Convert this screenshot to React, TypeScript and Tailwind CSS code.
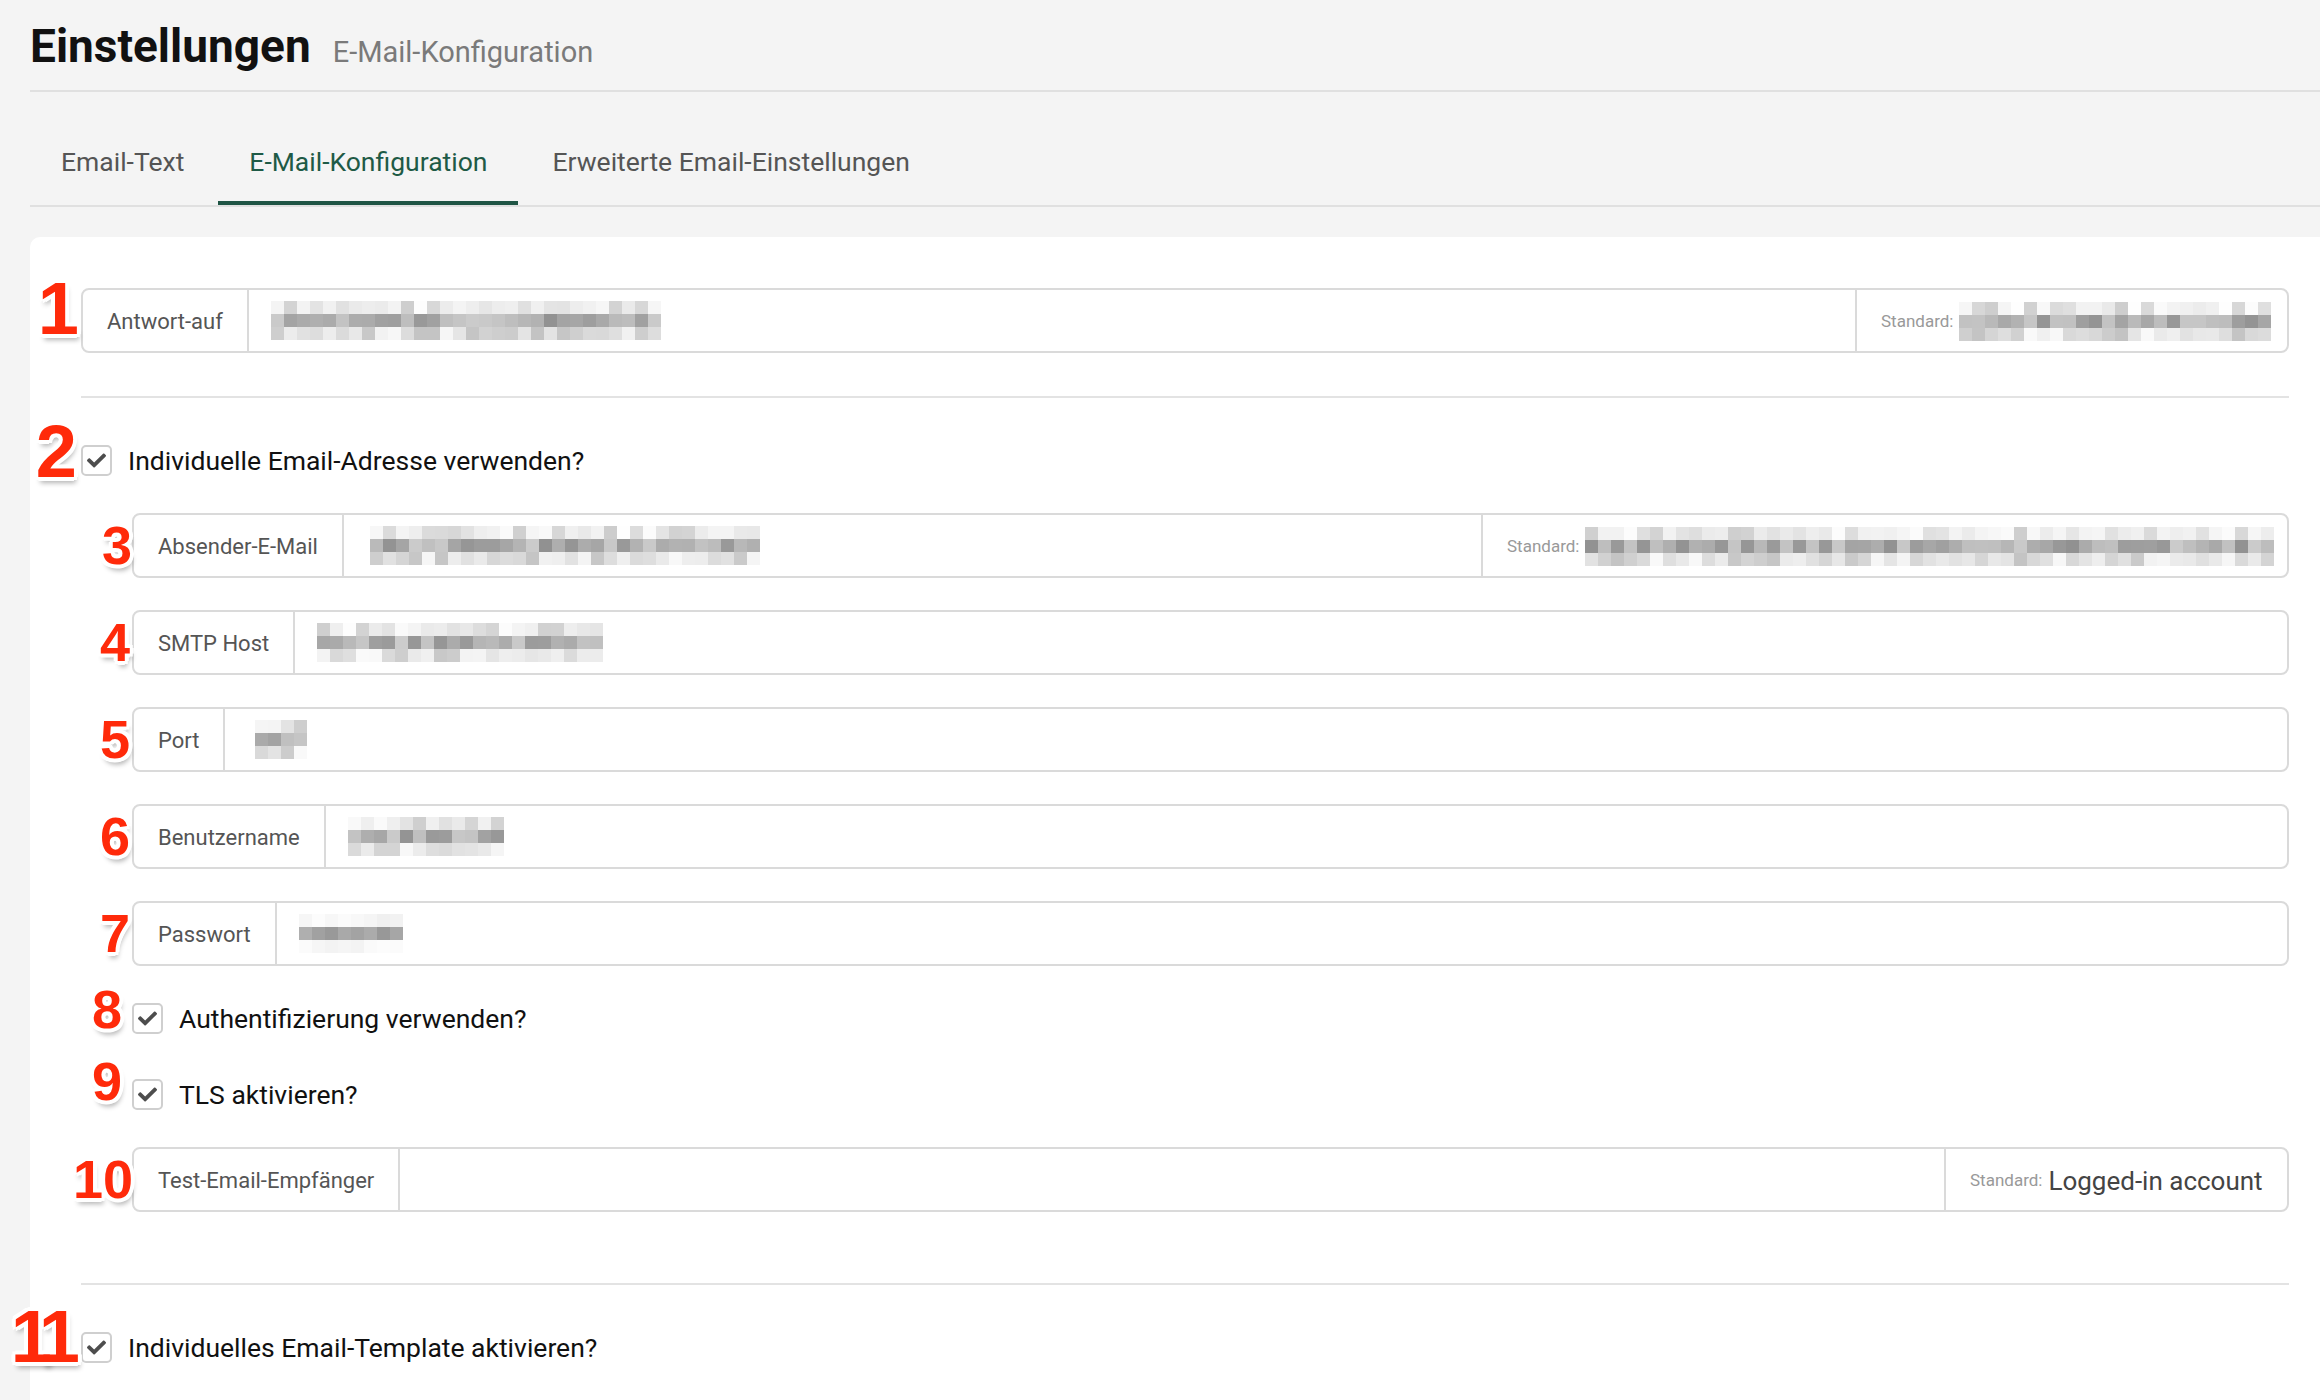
import type { ReactNode } from "react";

const SANS = "font-['Roboto','Liberation_Sans',sans-serif]";

// deterministic grey blocks that stand in for the pixelated values
function Mosaic({ cols, seed, rows = 3, mode = "text" }: { cols: number; seed: number; rows?: number; mode?: "text" | "dots" }) {
  let s = seed;
  const rand = () => {
    s = (s * 9301 + 49297) % 233280;
    return s / 233280;
  };
  const cells: number[] = [];
  for (let r = 0; r < rows; r++) {
    for (let c = 0; c < cols; c++) {
      let g: number;
      if (mode === "dots") {
        g = r === 1 ? 150 + rand() * 25 : 240 + rand() * 14;
      } else if (r === 1) {
        g = 145 + rand() * 60;
      } else if (r === 0) {
        g = rand() < 0.35 ? 205 + rand() * 25 : 232 + rand() * 22;
      } else {
        g = rand() < 0.5 ? 195 + rand() * 30 : 225 + rand() * 25;
      }
      cells.push(Math.round(g));
    }
  }
  return (
    <div className="grid" style={{ gridTemplateColumns: `repeat(${cols}, 13px)`, gridAutoRows: "13px" }}>
      {cells.map((g, i) => (
        <div key={i} style={{ backgroundColor: `rgb(${g},${g},${g})` }} />
      ))}
    </div>
  );
}

const MARK =
  "pointer-events-none absolute font-['Liberation_Sans',Arial,sans-serif] font-bold leading-none text-[#ff2a0a] [text-shadow:-3px_-3px_0_#fff,3px_-3px_0_#fff,-3px_3px_0_#fff,3px_3px_0_#fff,0_4px_0_#fff,0_-4px_0_#fff,4px_0_0_#fff,-4px_0_0_#fff,2px_6px_5px_rgba(0,0,0,0.3)]";

function Marker({ n, big, className }: { n: string; big?: boolean; className: string }) {
  return <span className={`${MARK} ${big ? "text-[74px]" : "text-[54px]"} ${className}`}>{n}</span>;
}

function Field({
  label,
  marker,
  children,
  standard,
  standardWidth,
}: {
  label: string;
  marker: ReactNode;
  children?: ReactNode;
  standard?: ReactNode;
  standardWidth?: string;
}) {
  return (
    <div className="relative flex h-[65px] rounded-[8px] border-2 border-[#dadada] bg-white">
      {marker}
      <div className="flex items-center border-r-2 border-[#dadada] px-[24px] pt-[3px] text-[22px] text-[#555]">{label}</div>
      <div className="flex min-w-0 flex-1 items-center pl-[22px]">{children}</div>
      {standard && (
        <div className={`flex items-center border-l-2 border-[#dadada] px-[24px] pt-[3px] ${standardWidth}`}>
          <span className="mr-[6px] text-[17px] text-[#999]">Standard:</span>
          {standard}
        </div>
      )}
    </div>
  );
}

function Check({ label, marker, className = "" }: { label: string; marker: ReactNode; className?: string }) {
  return (
    <div className={`relative flex items-center gap-[16px] ${className}`}>
      {marker}
      <span className="flex h-[31px] w-[31px] items-center justify-center rounded-[5px] border-2 border-[#cfcfcf] bg-white">
        <svg width="19" height="19" viewBox="0 0 512 512">
          <path
            fill="#4d4d4d"
            d="M173.898 439.404l-166.4-166.4c-9.997-9.997-9.997-26.206 0-36.204l36.203-36.204c9.997-9.998 26.207-9.998 36.204 0L192 312.69 432.095 72.596c9.997-9.997 26.207-9.997 36.204 0l36.203 36.204c9.997 9.997 9.997 26.206 0 36.204l-294.4 294.401c-9.998 9.997-26.207 9.997-36.204-.001z"
          />
        </svg>
      </span>
      <span className="pt-[3px] text-[26.5px] leading-none text-[#111]">{label}</span>
    </div>
  );
}

export default function App() {
  const tabs = ["Email-Text", "E-Mail-Konfiguration", "Erweiterte Email-Einstellungen"];
  return (
    <div className={`h-[1400px] w-[2320px] overflow-hidden bg-[#f4f4f4] pl-[30px] ${SANS}`}>
      <div className="flex items-baseline gap-[22px] border-b-2 border-[#e0e0e0] pt-[23px] pb-[21px]">
        <h1 className="text-[46px] leading-none font-bold text-[#111]">Einstellungen</h1>
        <span className="text-[29px] leading-none text-[#7a7a7a]">E-Mail-Konfiguration</span>
      </div>

      <div className="mt-[57px] flex gap-[3px] border-b-2 border-[#e0e0e0]">
        {tabs.map((t, i) => (
          <div
            key={t}
            className={`border-b-4 px-[31px] pb-[25px] text-[26.5px] leading-none ${
              i === 1 ? "border-[#1f5545] text-[#1e5a46]" : "border-transparent text-[#555]"
            }`}
          >
            {t}
          </div>
        ))}
      </div>

      <div className="mt-[30px] min-h-[1200px] w-[2310px] rounded-tl-[10px] bg-white px-[51px] pt-[51px]">
        <Field
          label="Antwort-auf"
          marker={<Marker n="1" big className="top-[-18px] right-full mr-[4px]" />}
          standard={<Mosaic cols={24} seed={31} />}
          standardWidth="w-[432px]"
        >
          <Mosaic cols={30} seed={7} />
        </Field>

        <div className="mt-[43px] h-[2px] bg-[#e3e3e3]" />

        <Check
          className="mt-[47px]"
          label="Individuelle Email-Adresse verwenden?"
          marker={<Marker n="2" big className="top-[-30px] right-full mr-[4px]" />}
        />

        <div className="mt-[37px] pl-[51px]">
          <div className="flex flex-col gap-[32px]">
            <Field
              label="Absender-E-Mail"
              marker={<Marker n="3" className="top-[3px] right-full mr-[2px]" />}
              standard={<Mosaic cols={53} seed={101} />}
              standardWidth="w-[806px]"
            >
              <div className="pl-[4px]">
                <Mosaic cols={30} seed={55} />
              </div>
            </Field>
            <Field label="SMTP Host" marker={<Marker n="4" className="top-[3px] right-full mr-[4px]" />}>
              <Mosaic cols={22} seed={77} />
            </Field>
            <Field label="Port" marker={<Marker n="5" className="top-[3px] right-full mr-[4px]" />}>
              <div className="pl-[8px]">
                <Mosaic cols={4} seed={13} />
              </div>
            </Field>
            <Field label="Benutzername" marker={<Marker n="6" className="top-[3px] right-full mr-[4px]" />}>
              <Mosaic cols={12} seed={91} />
            </Field>
            <Field label="Passwort" marker={<Marker n="7" className="top-[3px] right-full mr-[4px]" />}>
              <Mosaic cols={8} seed={5} mode="dots" />
            </Field>
          </div>

          <Check
            className="mt-[37px]"
            label="Authentifizierung verwenden?"
            marker={<Marker n="8" className="top-[-21px] right-full mr-[10px]" />}
          />
          <Check
            className="mt-[45px]"
            label="TLS aktivieren?"
            marker={<Marker n="9" className="top-[-25px] right-full mr-[10px]" />}
          />

          <div className="mt-[37px]">
            <Field
              label="Test-Email-Empfänger"
              marker={<Marker n="10" className="top-[3px] right-full mr-[1px]" />}
              standard={<span className="text-[26px] leading-none text-[#444]">Logged-in account</span>}
              standardWidth="w-[343px]"
            />
          </div>
        </div>

        <div className="mt-[71px] h-[2px] bg-[#e3e3e3]" />

        <Check
          className="mt-[47px]"
          label="Individuelles Email-Template aktivieren?"
          marker={<Marker n="11" big className="top-[-32px] right-full mr-[10px] tracking-[-9px]" />}
        />
      </div>
    </div>
  );
}
